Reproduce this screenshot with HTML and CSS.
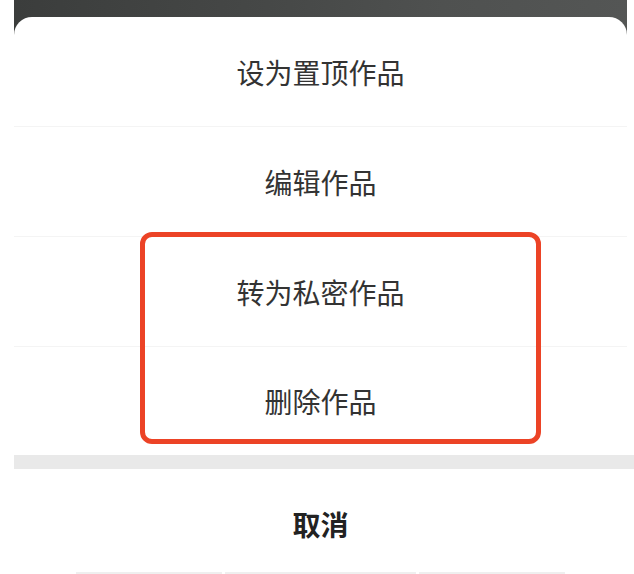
FILE: index.html
```
<!DOCTYPE html>
<html lang="zh-CN">
<head>
<meta charset="utf-8">
<link rel="stylesheet" href="styles.css">
</head>
<body>
<div class="page">
  <div class="backdrop"></div>
  <div class="sheet">
    <div class="item">设为置顶作品</div>
    <div class="item">编辑作品</div>
    <div class="item">转为私密作品</div>
    <div class="item last">删除作品</div>
    <div class="gap"></div>
    <div class="item cancel">取消</div>
    <div class="home"><span></span><span></span><span></span></div>
    <div class="highlight"></div>
  </div>
</div>
</body>
</html>
```
FILE: styles.css
```
html, body {
  margin: 0;
  padding: 0;
  background: #ffffff;
}
body {
  width: 634px;
  height: 574px;
  overflow: hidden;
  font-family: "Noto Sans CJK SC", "Noto Sans", sans-serif;
}
.page {
  display: flex;
  flex-direction: column;
  height: 574px;
}
.backdrop {
  height: 40px;
  margin: 0 7px 0 14px;
  background: linear-gradient(90deg, #3b3d3c 0%, #474948 45%, #4f5150 70%, #545655 100%);
  flex: none;
}
.sheet {
  position: relative;
  margin: -23px 7px 0 14px;
  background: #ffffff;
  border-radius: 18px 18px 0 0;
  display: flex;
  flex-direction: column;
  flex: 1;
}
.item {
  height: 109px;
  border-bottom: 1px solid #f4f4f4;
  display: flex;
  align-items: center;
  justify-content: center;
  font-size: 28px;
  color: #333333;
  flex: none;
}
.item.last {
  height: 108px;
  border-bottom: none;
}
.gap {
  height: 14px;
  background: #e9e9e9;
  margin-right: -7px;
  flex: none;
}
.item.cancel {
  height: 109px;
  border-bottom: none;
  font-weight: 700;
  color: #222222;
}
.home {
  display: flex;
  gap: 3px;
  padding: 0 62px;
  margin-top: -6px;
}
.home span {
  height: 2px;
  background: #efefef;
  flex: 1;
}
.home span:nth-child(2) {
  flex: 1.3;
}
.highlight {
  position: absolute;
  left: 126px;
  top: 215px;
  width: 391px;
  height: 202px;
  border: 5px solid #ec4326;
  border-radius: 12px;
}
```
